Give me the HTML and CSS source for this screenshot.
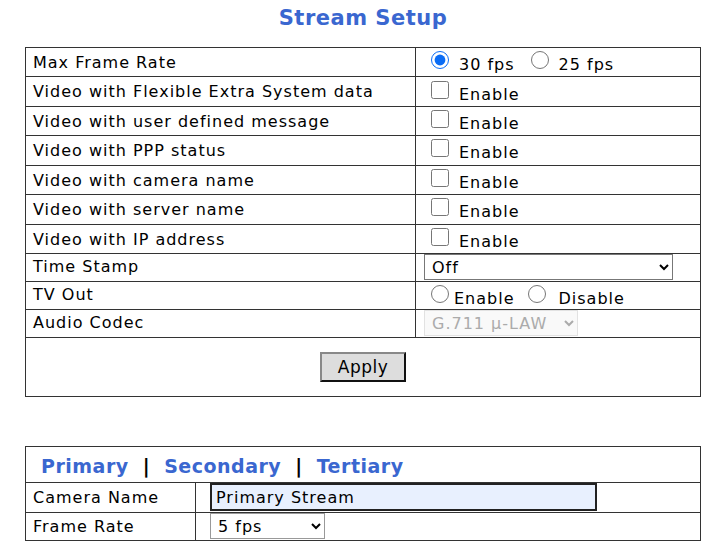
FILE: index.html
```html
<!DOCTYPE html>
<html>
<head>
<meta charset="utf-8">
<link rel="stylesheet" href="styles.css">
</head>
<body>
<h1 class="title">Stream Setup</h1>
<table class="setup">
  <colgroup><col class="c1"><col></colgroup>
  <tr><td class="lbl">Max Frame Rate</td><td class="val"><label class="opt"><input type="radio" name="mfr" checked><span>30 fps</span></label><label class="opt"><input type="radio" name="mfr"><span>25 fps</span></label></td></tr>
  <tr><td class="lbl">Video with Flexible Extra System data</td><td class="val"><label class="opt"><input type="checkbox"><span>Enable</span></label></td></tr>
  <tr><td class="lbl">Video with user defined message</td><td class="val"><label class="opt"><input type="checkbox"><span>Enable</span></label></td></tr>
  <tr><td class="lbl">Video with PPP status</td><td class="val"><label class="opt"><input type="checkbox"><span>Enable</span></label></td></tr>
  <tr><td class="lbl">Video with camera name</td><td class="val"><label class="opt"><input type="checkbox"><span>Enable</span></label></td></tr>
  <tr><td class="lbl">Video with server name</td><td class="val"><label class="opt"><input type="checkbox"><span>Enable</span></label></td></tr>
  <tr><td class="lbl">Video with IP address</td><td class="val"><label class="opt"><input type="checkbox"><span>Enable</span></label></td></tr>
  <tr class="short"><td class="lbl">Time Stamp</td><td class="val sel"><select class="ts"><option>Off</option></select></td></tr>
  <tr class="short"><td class="lbl">TV Out</td><td class="val"><label class="opt tv"><input type="radio" name="tv"><span>Enable</span></label><label class="opt tv tv2"><input type="radio" name="tv"><span>Disable</span></label></td></tr>
  <tr class="short"><td class="lbl">Audio Codec</td><td class="val sel"><select class="ac" disabled><option>G.711 µ-LAW</option></select></td></tr>
  <tr class="apply-row"><td colspan="2" class="apply-cell"><button class="apply">Apply</button></td></tr>
</table>

<table class="stream">
  <colgroup><col class="c1s"><col></colgroup>
  <tr class="tabs-row"><td colspan="2" class="tabs"><a class="tab">Primary</a><span class="sep">|</span><a class="tab">Secondary</a><span class="sep">|</span><a class="tab">Tertiary</a></td></tr>
  <tr class="r30"><td class="lbl2">Camera Name</td><td class="val2"><input class="cam" type="text" value="Primary Stream"></td></tr>
  <tr class="r28"><td class="lbl2">Frame Rate</td><td class="val2"><select class="fr"><option>5 fps</option></select></td></tr>
</table>
</body>
</html>
```
FILE: styles.css
```css
body {
  margin: 0;
  background: #fff;
  font-family: "DejaVu Sans", Verdana, sans-serif;
  font-size: 16px;
  letter-spacing: 1px;
  color: #000;
}
.title {
  margin: 6px 0 0;
  height: 41px;
  text-align: center;
  font-size: 21px;
  letter-spacing: 0.5px;
  font-weight: bold;
  color: #3a67d0;
}
table {
  border-collapse: collapse;
  margin: 0 auto;
  width: 676px;
  table-layout: fixed;
}
.c1 { width: 390px; }
.c1s { width: 170px; }
td {
  border: 1px solid #333;
  padding: 0;
}
.setup tr { height: 29.43px; }
.setup tr.short { height: 28px; }
.setup tr.apply-row { height: 59px; }
.lbl {
  padding-left: 7px;
  vertical-align: top;
  padding-top: 5px;
}
.short .lbl { padding-top: 3px; }
.val {
  padding-left: 14px;
  vertical-align: middle;
}
.val.sel { padding-left: 8px; }
.opt {
  display: inline-flex;
  align-items: flex-start;
}
.opt input {
  width: 18px;
  height: 18px;
  margin: 1px 10px 0 1px;
  accent-color: #0a6cf5;
}
.opt span { padding-top: 5px; margin-right: 15px; }
.opt.tv input { margin: 2px 5px 0 1px; }
.opt.tv span { padding-top: 6px; margin-right: 12px; }
.opt.tv2 input { margin-right: 13px; }
select {
  font-family: "DejaVu Sans", Verdana, sans-serif;
  font-size: 16px;
  letter-spacing: 1px;
  height: 26px;
  color: #000;
  background: #fff;
  border: 1px solid #777;
  border-radius: 0;
  padding: 0 3px;
}
.ts { width: 249px; }
.ac {
  width: 154px;
  color: #ababab;
  border-color: #e2e2e2;
  background: #f9f9f9;
  opacity: 1;
}
.apply-cell {
  text-align: center;
  vertical-align: middle;
}
.apply {
  width: 86px;
  height: 30px;
  font-family: "DejaVu Sans", Verdana, sans-serif;
  font-size: 17px;
  letter-spacing: 0.5px;
  background: #ddd;
  border: 2px solid;
  border-color: #888 #111 #111 #888;
  color: #000;
  padding: 0;
}
.stream { margin-top: 49px; }
.tabs-row { height: 36px; }
.tabs {
  padding-left: 15px;
  padding-top: 3px;
  font-size: 19px;
  letter-spacing: 0.5px;
  font-weight: bold;
}
.tab { color: #3a67d0; }
.sep { color: #000; margin: 0 14px; }
.r30 { height: 30px; }
.r28 { height: 28px; }
.lbl2 { padding-left: 7px; }
.val2 { padding-left: 14px; }
.cam {
  width: 387px;
  height: 28px;
  box-sizing: border-box;
  border: 2px solid #222;
  background: #e8f0fe;
  font-family: "DejaVu Sans", Verdana, sans-serif;
  font-size: 16px;
  letter-spacing: 1px;
  padding: 0 4px;
  margin: 0;
  display: block;
}
.fr {
  width: 115px;
  border-color: #999;
  display: block;
}
```
